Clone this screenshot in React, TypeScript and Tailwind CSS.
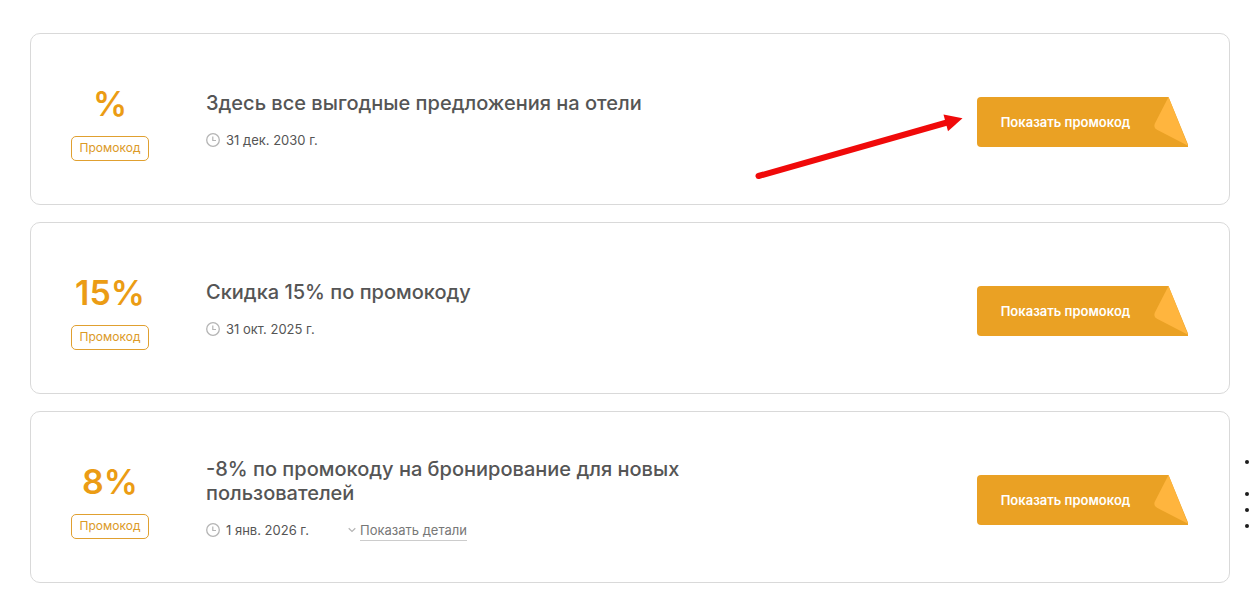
type Promo = {
  discount: string
  title: string
  date: string
  details?: boolean
}

const promos: Promo[] = [
  { discount: '%', title: 'Здесь все выгодные предложения на отели', date: '31 дек. 2030 г.' },
  { discount: '15%', title: 'Скидка 15% по промокоду', date: '31 окт. 2025 г.' },
  {
    discount: '8%',
    title: '-8% по промокоду на бронирование для новых пользователей',
    date: '1 янв. 2026 г.',
    details: true,
  },
]

const ClockIcon = () => (
  <svg width="14" height="14" viewBox="0 0 14 14" fill="none" stroke="#b5b5b5" className="shrink-0" aria-hidden="true">
    <circle cx="7" cy="7" r="6.3" strokeWidth="1.3" />
    <path d="M6.8 3.5v4H10" strokeWidth="1.2" />
  </svg>
)

const ChevronIcon = () => (
  <svg width="8" height="6" viewBox="0 0 8 6" fill="none" stroke="#b5b5b5" className="shrink-0" aria-hidden="true">
    <path d="M0.7 1.2L4 4.4l3.3-3.2" strokeWidth="1.2" />
  </svg>
)

// Button background with the folded corner
const RibbonShape = () => (
  <svg viewBox="0 0 211 50" className="absolute inset-0 h-full w-full" aria-hidden="true">
    <path d="M4 0H191.500L211 47.500V50H4a4 4 0 0 1-4-4V4a4 4 0 0 1 4-4z" fill="#eaa124" />
    <path d="M191.500 0L211 48.800L180 32.800Q176 30.500 178 26.300z" fill="#ffb53e" />
  </svg>
)

const PromoCard = ({ promo }: { promo: Promo }) => (
  <article className="flex min-h-[172px] items-center rounded-[10px] border border-[#d9d9d9] bg-white pr-[41px] pl-10">
    <div className="flex w-[78px] shrink-0 flex-col items-center gap-3 pt-1.5">
      <span className="text-[34px] leading-10 font-semibold text-[#eb9c14]">{promo.discount}</span>
      <span className="flex h-[25px] w-full items-center justify-center rounded-[5px] border border-[#e0a030] text-[12px] text-[#dc9a26]">
        Промокод
      </span>
    </div>

    <div className="ml-[57px] flex-1 pt-0.5">
      <h2 className="max-w-[490px] text-[20px] leading-6 font-medium text-[#555555]">{promo.title}</h2>
      <div className="mt-4 flex items-center text-[13px] leading-[18px] text-[#555555]">
        <ClockIcon />
        <span className="ml-1.5">{promo.date}</span>
        {promo.details && (
          <button type="button" className="ml-[39px] flex items-center gap-1 text-[#777777]">
            <ChevronIcon />
            <span className="-my-1 border-b border-[#cccccc] py-px">Показать детали</span>
          </button>
        )}
      </div>
    </div>

    <div className="shrink-0 pt-1.5">
      <button type="button" className="relative h-[50px] w-[211px] pt-0.5 pr-[34px] text-[13px] font-semibold text-white">
        <RibbonShape />
        <span className="relative">Показать промокод</span>
      </button>
    </div>
  </article>
)

const Arrow = () => (
  <svg width="210" height="70" viewBox="0 0 210 70" className="pointer-events-none absolute top-[112px] right-[289px]" aria-hidden="true">
    <path d="M3.500 64L192 10.500" stroke="#f00a0a" strokeWidth="6" strokeLinecap="round" />
    <path d="M188.500 2.500L207.500 6.200L193 19.300z" fill="#f00a0a" />
  </svg>
)

const App = () => {
  return (
    <main className="relative bg-white pt-[33px] pr-6 pb-[17px] pl-[30px] font-['Inter','Liberation_Sans',sans-serif]">
      <div className="flex flex-col gap-[17px]">
        {promos.map((promo) => (
          <PromoCard key={promo.title} promo={promo} />
        ))}
      </div>

      <Arrow />

      {/* Side list markers */}
      <div className="absolute top-[460px] right-[5px] flex flex-col gap-3" aria-hidden="true">
        <span className="mb-4 size-1 rounded-full bg-[#1c1c1c]" />
        <span className="size-1 rounded-full bg-[#1c1c1c]" />
        <span className="size-1 rounded-full bg-[#1c1c1c]" />
        <span className="size-1 rounded-full bg-[#1c1c1c]" />
      </div>
    </main>
  )
}

export default App
